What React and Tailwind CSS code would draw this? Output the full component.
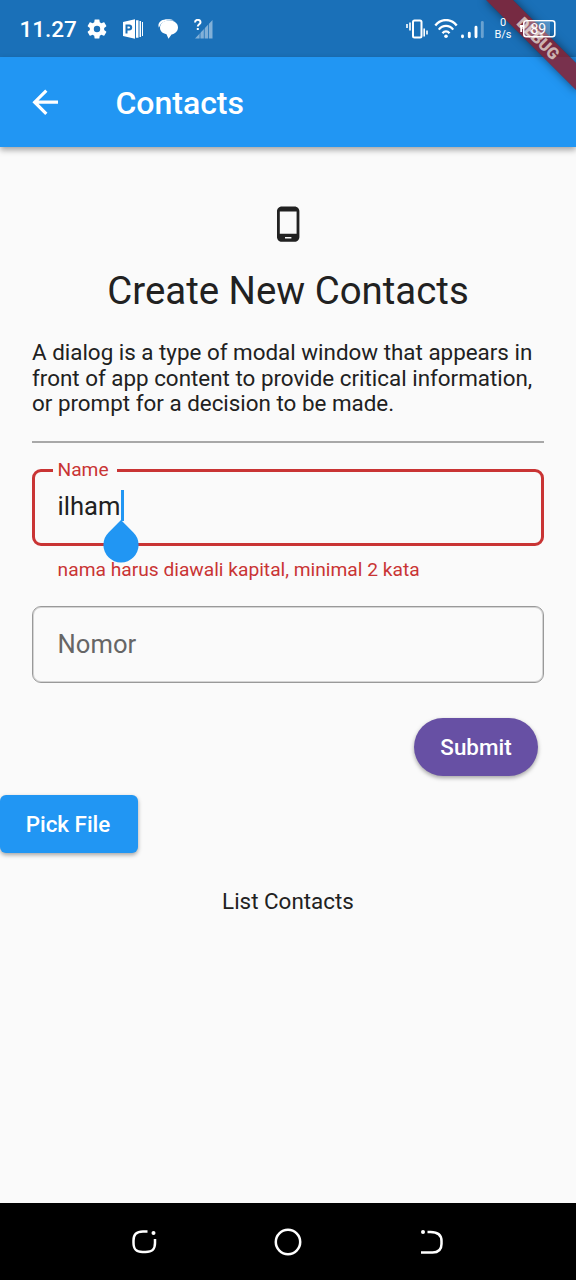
import React from "react";

function StatusBar() {
  return (
    <div className="bg-[#1a70b8] text-white">
      <div className="relative z-20 flex h-[57px] items-center">
        <span className="ml-[19.500px] w-[65.500px] text-[22.500px] font-medium leading-[60px] whitespace-nowrap">11.27</span>
        <svg className="h-[24px] w-[24px]" viewBox="0 0 24 24" fill="currentColor">
          <path d="M19.14 12.94c.04-.3.06-.61.06-.94 0-.32-.02-.64-.07-.94l2.03-1.58c.18-.14.23-.41.12-.61l-1.92-3.32c-.12-.22-.37-.29-.59-.22l-2.39.96c-.5-.38-1.03-.7-1.62-.94l-.36-2.54c-.04-.24-.24-.41-.48-.41h-3.84c-.24 0-.43.17-.47.41l-.36 2.54c-.59.24-1.13.57-1.62.94l-2.39-.96c-.22-.08-.47 0-.59.22L2.74 8.87c-.12.21-.08.47.12.61l2.03 1.58c-.05.3-.09.63-.09.94s.02.64.07.94l-2.03 1.58c-.18.14-.23.41-.12.61l1.92 3.32c.12.22.37.29.59.22l2.39-.96c.5.38 1.03.7 1.62.94l.36 2.54c.05.24.24.41.48.41h3.84c.24 0 .44-.17.47-.41l.36-2.54c.59-.24 1.13-.56 1.62-.94l2.39.96c.22.08.47 0 .59-.22l1.92-3.32c.12-.22.07-.47-.12-.61zM12 15.200a3.200 3.200 0 1 1 0-6.400 3.200 3.200 0 0 1 0 6.400z" />
        </svg>
        <svg className="ml-[14px] h-[20px] w-[20px]" viewBox="0 0 20 20">
          <path fill="white" fillRule="evenodd" d="M0 3 12 .3v19.400L0 17zM2.500 5.500v9h2v-3h1.700a3 3 0 0 0 0-6zM4.500 7.500h1.500a1 1 0 0 1 0 2H4.500z" />
          <path fill="white" d="M13 1.200h2.500v17.600H13zM16.500 2h1.500v16h-1.500zM19 3h1v14h-1z" />
        </svg>
        <svg className="ml-[15px] h-[20px] w-[20px]" viewBox="0 0 20 20">
          <path fill="white" d="M.8 8.500C-1 3 4 .2 9.500.2c3 0 5 .5 6.500 1.400C9 .8 3 2.500 1.300 8z" />
          <path fill="white" d="M11 1.600c5.500 0 9 2.800 9 6.900 0 3.800-3.200 6.500-6.500 7L10.500 19.800 8.500 15.200C4.500 14.500 2 12 2 8.800 2 4.400 6 1.600 11 1.600z" />
        </svg>
        <svg className="ml-[16px] h-[20px] w-[20px]" viewBox="0 0 20 20">
          <path fill="white" opacity=".45" d="M1 19.500 18.500 1v18.500z" />
          <path stroke="#1a70b8" strokeWidth=".8" d="M6 10v10M10.300 8v12M14.500 4v16" />
          <path stroke="white" strokeWidth="2" fill="none" d="M1 3.500C1 0 6.500 0 6.500 3.200c0 2-2.700 2-2.700 4.300M3.800 9v2" />
        </svg>
        <svg className="ml-[192px] h-[20px] w-[22px]" viewBox="0 0 22 20" fill="none" stroke="white">
          <rect x="7" y="1.500" width="8.500" height="17" rx="1.500" strokeWidth="2" />
          <path strokeWidth="1.600" d="M1 5v4M4 3.500v8M18.200 9.500v8M21 11.500v4" />
        </svg>
        <svg className="ml-[6px] h-[20px] w-[24px]" viewBox="0 0 24 20" fill="none" stroke="white" strokeWidth="2.300">
          <path d="M1.300 6.500C7-.8 17-.8 22.700 6.500M4.800 10.600c4-5 10.400-5 14.400 0M8.500 14.200c2-2.500 5-2.500 7 0" />
          <circle cx="12" cy="17.200" r="1.800" fill="white" stroke="none" />
        </svg>
        <svg className="ml-[2px] h-[20px] w-[24px]" viewBox="0 0 24 20" fill="none" stroke="white" strokeWidth="2.900" strokeLinecap="round">
          <path d="M2.500 17.800v-.8M9.300 17.800v-3.600M16 17.800V8.200" />
          <path opacity=".35" d="M22.300 17.800V3.500" />
        </svg>
        <div className="ml-[10px] flex w-[18px] flex-col items-center pt-[1px] text-[11px] leading-[12px]">
          <span>0</span>
          <span>B/s</span>
        </div>
      </div>
    </div>
  );
}

function Battery() {
  return (
    <div className="absolute left-[520px] top-[19px] z-20 h-[20px] w-[36px]">
      <svg className="absolute inset-0 h-[20px] w-[36px]" viewBox="0 0 36 20" fill="none">
        <path d="M5 3h25v14H5z" fill="white" opacity=".25" />
        <rect x="3.800" y="1.800" width="31" height="16" rx="2.500" stroke="white" strokeWidth="1.600" />
        <path d="M1.200 6.500v6.500M0 7h4" stroke="white" strokeWidth="1.800" />
      </svg>
      <span className="absolute left-[10.500px] top-0 text-[14px] leading-[20px] text-white">89</span>
    </div>
  );
}

function AppBar() {
  return (
    <header className="relative flex h-[90px] items-center bg-[#2196f3] text-white shadow-[0_3px_6px_rgba(0,0,0,0.35)]">
      <svg className="ml-[26px] h-[38.400px] w-[38.400px]" viewBox="0 0 24 24" fill="currentColor">
        <path d="M20 11H7.830l5.590-5.590L12 4l-8 8 8 8 1.410-1.410L7.830 13H20v-2z" />
      </svg>
      <h1 className="ml-[51px] pt-[2px] text-[32px] font-medium leading-[40px]">Contacts</h1>
    </header>
  );
}

export default function App() {
  return (
    <div className="relative flex h-[1280px] w-[576px] flex-col overflow-hidden bg-[#fafafa] font-['Roboto',sans-serif] text-[#212121]">
      <StatusBar />
      <AppBar />
      <main className="flex flex-1 flex-col">
        <div className="flex flex-col px-[32px] pt-[58px]">
          <svg className="h-[38.400px] w-[38.400px] self-center" viewBox="0 0 24 24" fill="currentColor">
            <path d="M16 1H8C6.340 1 5 2.340 5 4v16c0 1.660 1.340 3 3 3h8c1.660 0 3-1.340 3-3V4c0-1.660-1.340-3-3-3zm-2 20h-4v-1h4v1zm3.250-3H6.750V4h10.500v14z" />
          </svg>
          <h2 className="mt-[22px] text-center text-[38.400px] leading-[51px] whitespace-nowrap">Create New Contacts</h2>
          <p className="mt-[23.600px] text-[22.400px] leading-[25.700px] whitespace-nowrap">
            A dialog is a type of modal window that appears in<br />
            front of app content to provide critical information,<br />
            or prompt for a decision to be made.
          </p>
          <div className="mt-[24.400px] h-[2px] bg-[#a8a8a8]" />
          <div className="relative mt-[26px] flex h-[77px] items-center rounded-[9px] border-[3px] border-[#c93434] pb-[3px] pl-[22.500px]">
            <span className="absolute left-[18px] top-[-14px] bg-[#fafafa] pl-[4.500px] pr-[8.500px] text-[19.200px] leading-[24px] text-[#c93434]">Name</span>
            <span className="text-[25.600px] leading-[32px]">ilham</span>
            <span className="absolute left-[86px] top-[18px] h-[31px] w-[3px] bg-[#2196f3]" />
            <svg className="absolute left-[67.500px] top-[48px] z-10 h-[43px] w-[36px]" viewBox="0 0 36 43">
              <path fill="#2196f3" d="M18 0 30.400 12.400a17.600 17.600 0 1 1-24.800 0z" />
            </svg>
          </div>
          <p className="mt-[12px] pl-[25.600px] text-[19.200px] leading-[24px] text-[#c93434]">nama harus diawali kapital, minimal 2 kata</p>
          <div className="mt-[24px] flex h-[77px] items-center rounded-[9px] border border-[#999] pb-[1px] pl-[24.600px] text-[25.600px] text-[#666] shadow-[inset_0_0_0_1px_rgba(0,0,0,0.15)]">Nomor</div>
          <button className="mr-[6px] mt-[35px] h-[58px] w-[124px] self-end rounded-full bg-[#6750a4] text-[22.400px] font-medium text-white shadow-[0_2px_4px_rgba(0,0,0,0.35)]">Submit</button>
        </div>
        <button className="mt-[19px] h-[58px] w-[138px] rounded-[6px] bg-[#2196f3] pr-[2px] text-[22.400px] font-medium text-white shadow-[0_2px_4px_rgba(0,0,0,0.35)]">Pick File</button>
        <p className="mt-[35px] text-center text-[22.400px] leading-[26px]">List Contacts</p>
      </main>
      <nav className="flex h-[77px] items-center justify-center gap-[114px] bg-black">
        <svg className="h-[30px] w-[30px]" viewBox="0 0 30 30" fill="none" stroke="white" strokeWidth="2.500">
          <path d="M18.500 4.500h-4.500c-7 0-9.500 3-9.500 9v2c0 7 2.500 9.500 9 9.500h3c7 0 9.500-2.500 9.500-9v-4" />
          <circle cx="24.500" cy="6" r="2" fill="white" stroke="none" />
        </svg>
        <svg className="h-[30px] w-[30px]" viewBox="0 0 30 30" fill="none" stroke="white" strokeWidth="2.500">
          <circle cx="15" cy="15" r="12.200" />
        </svg>
        <svg className="h-[30px] w-[30px]" viewBox="0 0 30 30" fill="none" stroke="white" strokeWidth="2.500">
          <path d="M10.500 5h3c7.500 0 11 3 11 9v3c0 6-3 8.500-9 8.500H4" />
          <circle cx="6" cy="5" r="2" fill="white" stroke="none" />
        </svg>
      </nav>
      <div className="absolute left-[473.500px] top-[28.900px] z-10 flex h-[19.200px] w-[128px] rotate-45 items-center justify-center bg-[#8d1a26]/81 text-[16.300px] font-black leading-[19px] text-[#e8e0d8]/75 shadow-[0_0_10px_rgba(0,0,0,0.5)]">DEBUG</div>
      <Battery />
    </div>
  );
}
